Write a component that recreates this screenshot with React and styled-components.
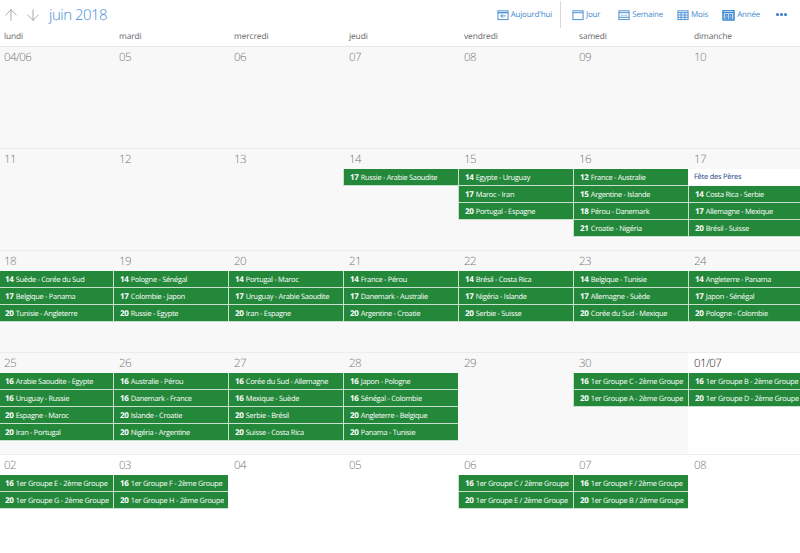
import styled, { createGlobalStyle } from "styled-components";
import { ArrowUp, ArrowDown } from "lucide-react";

const weekdays = ["lundi", "mardi", "mercredi", "jeudi", "vendredi", "samedi", "dimanche"];

const weeks = [
  [
    { label: "04/06" }, { label: "05" }, { label: "06" }, { label: "07" },
    { label: "08" }, { label: "09" }, { label: "10" },
  ],
  [
    { label: "11" }, { label: "12" }, { label: "13" },
    { label: "14", events: [["17", "Russie - Arabie Saoudite"]] },
    { label: "15", events: [["14", "Egypte - Uruguay"], ["17", "Maroc - Iran"], ["20", "Portugal - Espagne"]] },
    { label: "16", events: [["12", "France - Australie"], ["15", "Argentine - Islande"], ["18", "Pérou - Danemark"], ["21", "Croatie - Nigéria"]] },
    { label: "17", holiday: "Fête des Pères", events: [["14", "Costa Rica - Serbie"], ["17", "Allemagne - Mexique"], ["20", "Brésil - Suisse"]] },
  ],
  [
    { label: "18", events: [["14", "Suède - Corée du Sud"], ["17", "Belgique - Panama"], ["20", "Tunisie - Angleterre"]] },
    { label: "19", events: [["14", "Pologne - Sénégal"], ["17", "Colombie - Japon"], ["20", "Russie - Egypte"]] },
    { label: "20", events: [["14", "Portugal - Maroc"], ["17", "Uruguay - Arabie Saoudite"], ["20", "Iran - Espagne"]] },
    { label: "21", events: [["14", "France - Pérou"], ["17", "Danemark - Australie"], ["20", "Argentine - Croatie"]] },
    { label: "22", events: [["14", "Brésil - Costa Rica"], ["17", "Nigéria - Islande"], ["20", "Serbie - Suisse"]] },
    { label: "23", events: [["14", "Belgique - Tunisie"], ["17", "Allemagne - Suède"], ["20", "Corée du Sud - Mexique"]] },
    { label: "24", events: [["14", "Angleterre - Panama"], ["17", "Japon - Sénégal"], ["20", "Pologne - Colombie"]] },
  ],
  [
    { label: "25", events: [["16", "Arabie Saoudite - Egypte"], ["16", "Uruguay - Russie"], ["20", "Espagne - Maroc"], ["20", "Iran - Portugal"]] },
    { label: "26", events: [["16", "Australie - Pérou"], ["16", "Danemark - France"], ["20", "Islande - Croatie"], ["20", "Nigéria - Argentine"]] },
    { label: "27", events: [["16", "Corée du Sud - Allemagne"], ["16", "Mexique - Suède"], ["20", "Serbie - Brésil"], ["20", "Suisse - Costa Rica"]] },
    { label: "28", events: [["16", "Japon - Pologne"], ["16", "Sénégal - Colombie"], ["20", "Angleterre - Belgique"], ["20", "Panama - Tunisie"]] },
    { label: "29" },
    { label: "30", events: [["16", "1er Groupe C - 2ème Groupe"], ["20", "1er Groupe A - 2ème Groupe"]] },
    { label: "01/07", next: true, strong: true, events: [["16", "1er Groupe B - 2ème Groupe"], ["20", "1er Groupe D - 2ème Groupe"]] },
  ],
  [
    { label: "02", next: true, events: [["16", "1er Groupe E - 2ème Groupe"], ["20", "1er Groupe G - 2ème Groupe"]] },
    { label: "03", next: true, events: [["16", "1er Groupe F - 2ème Groupe"], ["20", "1er Groupe H - 2ème Groupe"]] },
    { label: "04", next: true },
    { label: "05", next: true },
    { label: "06", next: true, events: [["16", "1er Groupe C / 2ème Groupe"], ["20", "1er Groupe E / 2ème Groupe"]] },
    { label: "07", next: true, events: [["16", "1er Groupe F / 2ème Groupe"], ["20", "1er Groupe B / 2ème Groupe"]] },
    { label: "08", next: true },
  ],
];

const views = [
  { label: "Jour", icon: "day", extra: 4 },
  { label: "Semaine", icon: "week" },
  { label: "Mois", icon: "month" },
  { label: "Année", icon: "year" },
];

const GlobalStyle = createGlobalStyle`
  html, body {
    margin: 0;
    height: 100%;
    background: #fff;
    overflow: hidden;
  }
  body, button {
    font-family: "Open Sans", "Noto Sans", sans-serif;
    text-rendering: geometricPrecision;
  }
`;

const Page = styled.div`
  width: 800px;
  height: 553px;
  overflow: hidden;
  display: flex;
  flex-direction: column;
`;

const Toolbar = styled.header`
  height: 29px;
  flex: none;
  display: flex;
  align-items: center;
  justify-content: space-between;
  padding: 0 13px 0 2px;
`;

const Nav = styled.div`
  display: flex;
  align-items: center;
  color: #9a9a9a;
  gap: 4px;
`;

const Title = styled.h1`
  margin: 0 0 0 3px;
  font-size: 15px;
  font-weight: 300;
  letter-spacing: -0.5px;
  color: #3d8bd4;
  line-height: 20px;
`;

const Actions = styled.div`
  display: flex;
  align-items: center;
  gap: 14px;
  height: 28px;
`;

const Action = styled.button`
  display: flex;
  align-items: center;
  gap: 2px;
  padding: 0 ${(p) => p.$extra || 0}px 0 0;
  border: 0;
  background: none;
  color: #3f8ad0;
  font-size: 8px;
  letter-spacing: -0.2px;
  white-space: nowrap;
`;

const Separator = styled.span`
  width: 1px;
  height: 27px;
  background: #d8d8d8;
  margin: 0 -3px 0 -6px;
`;

const Dots = styled.span`
  display: flex;
  gap: 1px;
  margin-left: 2px;

  i {
    width: 3px;
    height: 3px;
    border-radius: 50%;
    background: #2f7fc9;
  }
`;

const Weekdays = styled.div`
  height: 17px;
  flex: none;
  margin-left: -2px;
  display: grid;
  grid-template-columns: repeat(7, 115px);
  border-bottom: 1px solid #e6e6e6;
`;

const Weekday = styled.div`
  padding: 1px 0 0 6px;
  font-size: 8.4px;
  letter-spacing: -0.1px;
  line-height: 13px;
  color: #666;
`;

const Grid = styled.div`
  flex: 1;
  margin-left: -2px;
  display: grid;
  grid-template-columns: repeat(7, 115px);
  grid-template-rows: repeat(4, 102px) 1fr;
`;

const Day = styled.div`
  min-width: 0;
  display: flex;
  flex-direction: column;
  background: ${(p) => (p.$next ? "#fff" : "#f8f8f8")};
  border-bottom: 1px solid #ececec;
  box-sizing: border-box;
  &:nth-last-child(-n + 7) {
    border-bottom: 0;
  }
`;

const DayLabel = styled.div`
  height: 20px;
  flex: none;
  padding: 3px 0 0 6px;
  box-sizing: border-box;
  font-size: 11.5px;
  font-weight: 300;
  letter-spacing: -0.6px;
  line-height: 15px;
  color: ${(p) => (p.$strong ? "#222" : "#777")};
`;

const Event = styled.div`
  height: 17px;
  flex: none;
  box-sizing: border-box;
  padding: 0 4px 0 6px;
  background: #24883a;
  border-bottom: 1px solid #c9e0ce;
  border-left: 1px solid #c9e0ce;
  color: #fff;
  font-size: 7.4px;
  letter-spacing: -0.27px;
  line-height: 17px;

  span {
    display: block;
    height: 16px;
    white-space: nowrap;
    overflow: hidden;
  }

  b {
    font-weight: 700;
    font-size: 8px;
    letter-spacing: -0.2px;
    margin-right: 2px;
  }
`;

const Holiday = styled.div`
  height: 17px;
  flex: none;
  box-sizing: border-box;
  padding-left: 6px;
  background: #fff;
  color: #1f3c88;
  font-size: 7.4px;
  letter-spacing: -0.2px;
  line-height: 17px;
  white-space: nowrap;
`;

const CalIcon = ({ kind }) => {
  const wide = kind === "year" ? 13 : 12;
  return (
    <svg width={wide} height="12" viewBox="0 0 13 12" fill="none" stroke="currentColor" strokeWidth="1">
      <rect x="1" y="1.5" width="11" height="9.5" />
      <path d="M1 3.5h11" />
      {kind === "today" && <path d="M9.5 7H4M6 5L4 7l2 2M1 3.5h11" />}
      {kind === "week" && <path d="M1 8.5h11M3 6.3h1M5 6.3h1M7 6.3h1M9 6.3h1" />}
      {kind === "month" && <path d="M4.5 3.5V11M8.5 3.5V11M1 6h11M1 8.5h11" />}
      {kind === "year" && (
        <>
          <rect x="1" y="1.5" width="11" height="9.5" fill="currentColor" fillOpacity="0.35" />
          <path d="M3.5 5.5h2v1.5h-2zM7.5 5.5h2v1.5h-2zM3.5 8h2v1.5h-2zM7.5 8h2v1.5h-2z" fill="#fff" />
        </>
      )}
    </svg>
  );
};

export default function App() {
  return (
    <>
      <GlobalStyle />
      <Page>
        <Toolbar>
          <Nav>
            <ArrowUp size={18} strokeWidth={1.1} />
            <ArrowDown size={18} strokeWidth={1.1} />
            <Title>juin 2018</Title>
          </Nav>
          <Actions>
            <Action>
              <CalIcon kind="today" />
              Aujourd'hui
            </Action>
            <Separator />
            {views.map((v) => (
              <Action key={v.label} $extra={v.extra}>
                <CalIcon kind={v.icon} />
                {v.label}
              </Action>
            ))}
            <Dots>
              <i />
              <i />
              <i />
            </Dots>
          </Actions>
        </Toolbar>
        <Weekdays>
          {weekdays.map((d) => (
            <Weekday key={d}>{d}</Weekday>
          ))}
        </Weekdays>
        <Grid>
          {weeks.flat().map((day) => (
            <Day key={day.label} $next={day.next}>
              <DayLabel $strong={day.strong}>{day.label}</DayLabel>
              {day.holiday && <Holiday>{day.holiday}</Holiday>}
              {(day.events || []).map(([hour, name]) => (
                <Event key={hour + name}>
                  <span>
                    <b>{hour}</b>
                    {name}
                  </span>
                </Event>
              ))}
            </Day>
          ))}
        </Grid>
      </Page>
    </>
  );
}
